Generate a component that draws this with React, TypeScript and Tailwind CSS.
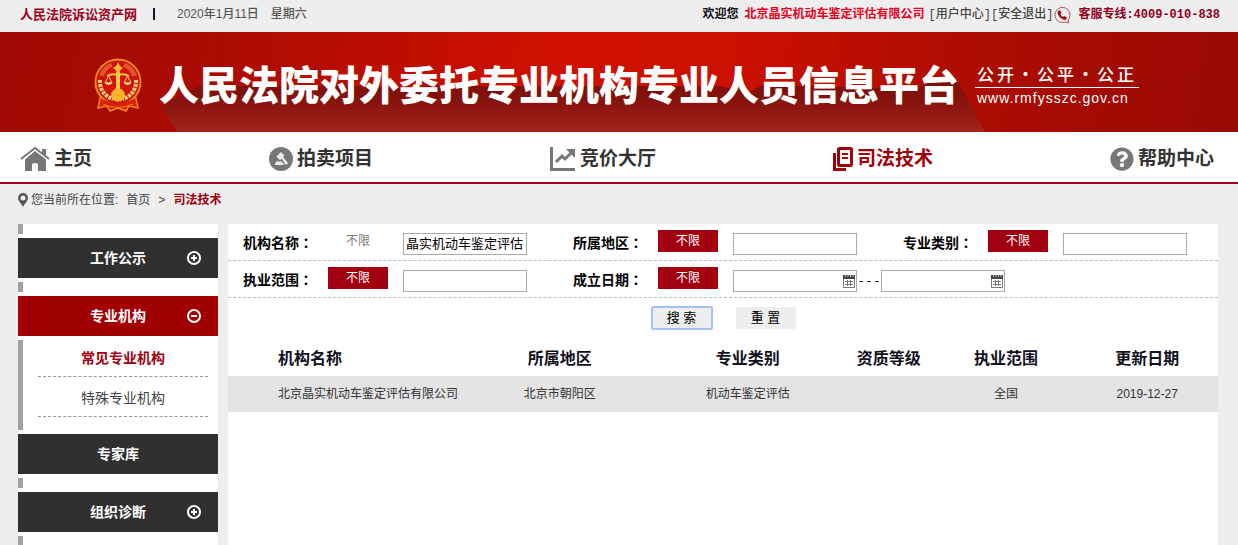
import { useState } from 'react'
import type { ReactNode } from 'react'
import { FaQuestionCircle } from 'react-icons/fa'

interface NavItem {
  label: string
  icon: ReactNode
  active?: boolean
}

interface SideItem {
  label: string
  toggle?: 'plus' | 'minus'
  children?: string[]
}

function Emblem() {
  return (
    <svg width="48" height="54" viewBox="0 0 48 54" className="shrink-0" aria-hidden="true">
      <path d="M7 36 L4 50 L13 48 L16 53 L24 50 L32 53 L35 48 L44 50 L41 36Z" fill="#d8200c" stroke="#f0861c" strokeWidth="1.5" />
      <circle cx="24" cy="24" r="22.5" fill="#c9150b" stroke="#f0861c" strokeWidth="2" />
      {/* flags above, wheat below */}
      <path d="M7.500 18 A18 18 0 0 1 18 7 M40.500 18 A18 18 0 0 0 30 7" fill="none" stroke="#e4532c" strokeWidth="5" />
      <path d="M6 22 A18 18 0 0 0 19 41 M42 22 A18 18 0 0 1 29 41" fill="none" stroke="#f7cf7a" strokeWidth="4" strokeDasharray="3 1" />
      <circle cx="24" cy="23" r="15" fill="#d3140b" />
      <path d="M24 4 L26 8 L29 10 L26.500 12 L25 15 H23 L21.500 12 L19 10 L22 8Z" fill="#fbb52d" />
      <path d="M13 18 Q18 15 24 17 Q30 15 35 18" fill="none" stroke="#fbc93f" strokeWidth="2" />
      <path d="M22 14h4v20h-4z" fill="#fbc93f" />
      <path d="M14.500 18 L11 25 H18Z M33.500 18 L30 25 H37Z" fill="none" stroke="#fbd980" />
      <path d="M10.500 24.500 h8 q-4 5 -8 0Z M29.500 24.500 h8 q-4 5 -8 0Z" fill="#fbd980" />
      <circle cx="24" cy="37" r="6.5" fill="#fbb52d" stroke="#f4c03c" strokeDasharray="2 1" />
      <path d="M8 43 Q24 51 40 43" fill="none" stroke="#d8200c" strokeWidth="4" />
      <path d="M9 46 Q24 53 39 46" fill="none" stroke="#f0861c" />
    </svg>
  )
}

function HomeIcon() {
  return (
    <svg width="30" height="26" viewBox="0 0 30 26" aria-hidden="true">
      <path d="M1 13 L15 2 L29 13" fill="none" stroke="currentColor" strokeWidth="2" />
      <path d="M22 3h4v7l-4-3z" fill="currentColor" />
      <path d="M15 5 L26 13.500 V25 H18 V19 Q18 17 15 17 Q12 17 12 19 V25 H5 V13.500Z" fill="currentColor" />
    </svg>
  )
}

function GavelIcon() {
  return (
    <svg width="24" height="24" viewBox="0 0 24 24" aria-hidden="true">
      <circle cx="12" cy="12" r="12" fill="currentColor" />
      <path d="M12 5 L15.500 8.500 L11 13 L7.500 9.500Z M12.500 11.500 L14 10 L19 16 L17 18Z M7 14.500h6v1.500h1.500V18H6v-2h1z" fill="#eee" />
    </svg>
  )
}

function ChartIcon() {
  return (
    <svg width="26" height="24" viewBox="0 0 26 24" aria-hidden="true">
      <path d="M1.500 0 V22.500 H25" fill="none" stroke="currentColor" strokeWidth="3" />
      <path d="M6 15 L12 9 L15 12 L22 5" fill="none" stroke="currentColor" strokeWidth="3" />
      <path d="M16 2h9v9z" fill="currentColor" />
    </svg>
  )
}

function DocsIcon() {
  return (
    <svg width="20" height="24" viewBox="0 0 20 24" fill="none" stroke="currentColor" aria-hidden="true">
      <rect x="5.500" y="1.500" width="13" height="17" rx="1" strokeWidth="3" />
      <path d="M1.500 6 V22.500 H13" strokeWidth="3" />
      <path d="M9 7h6M9 11h6" strokeWidth="2" />
    </svg>
  )
}

function PhoneIcon() {
  return (
    <svg width="18" height="18" viewBox="0 0 18 18" aria-hidden="true">
      <path d="M15 14 A7.500 7.500 0 1 0 12 16 L16 17Z" fill="none" stroke="#b4555a" />
      <path d="M5 5 L7 4 L8.500 7 L7.500 8 Q8 10 10 11 L11 10 L14 11.500 L13 13.500 Q11 15 7 11.500 Q3.500 7.500 5 5Z" fill="#a0101c" />
    </svg>
  )
}

function PinIcon() {
  return (
    <svg width="10" height="14" viewBox="0 0 10 14" aria-hidden="true">
      <path fillRule="evenodd" d="M5 0 A5 5 0 0 1 10 5 C10 8 7 10 5 14 C3 10 0 8 0 5 A5 5 0 0 1 5 0Z M5 2.500 A2.500 2.500 0 1 0 5 7.500 A2.500 2.500 0 1 0 5 2.500Z" fill="#555" />
    </svg>
  )
}

function ToggleIcon({ type }: { type: 'plus' | 'minus' }) {
  return (
    <svg width="14" height="14" viewBox="0 0 14 14" fill="none" stroke="#fff" strokeWidth="2" aria-hidden="true">
      <circle cx="7" cy="7" r="6" />
      <path d={type === 'plus' ? 'M4 7h6M7 4v6' : 'M4 7h6'} />
    </svg>
  )
}

function CalendarIcon() {
  return (
    <svg width="12" height="14" viewBox="0 0 12 14" fill="none" aria-hidden="true">
      <path d="M0.500 3.500h11v10h-11z" fill="#fff" stroke="#777" />
      <path d="M0 1h12v4H0z" fill="#444" />
      <path d="M2.500 1v2M5 1v2M7.500 1v2M10 1v2" stroke="#bbb" />
      <path d="M2 7.500h8M2 10.500h8M4.500 6v6M7.500 6v6" stroke="#777" />
    </svg>
  )
}

const navItems: NavItem[] = [
  { label: '主页', icon: <HomeIcon /> },
  { label: '拍卖项目', icon: <GavelIcon /> },
  { label: '竞价大厅', icon: <ChartIcon /> },
  { label: '司法技术', icon: <DocsIcon />, active: true },
  { label: '帮助中心', icon: <FaQuestionCircle size={24} /> },
]

const sideItems: SideItem[] = [
  { label: '工作公示', toggle: 'plus' },
  { label: '专业机构', toggle: 'minus', children: ['常见专业机构', '特殊专业机构'] },
  { label: '专家库' },
  { label: '组织诊断', toggle: 'plus' },
]

const rows = [
  {
    name: '北京晶实机动车鉴定评估有限公司',
    area: '北京市朝阳区',
    category: '机动车鉴定评估',
    level: '',
    scope: '全国',
    date: '2019-12-27',
  },
]

function Sidebar() {
  return (
    <aside className="flex w-[200px] shrink-0 flex-col bg-white">
      {sideItems.map((item, i) => (
        <div key={item.label}>
          {!sideItems[i - 1]?.children && <div className="h-[10px] w-[5px] bg-[#a0a0a0]" />}
          <button
            className={`my-1 grid h-10 w-full grid-cols-[1fr_auto_1fr] items-center text-sm font-bold text-white ${
              item.children ? 'bg-[#a00000]' : 'bg-[#303030]'
            }`}
          >
            <span />
            <span>{item.label}</span>
            <span className="flex justify-end pr-[17px]">{item.toggle && <ToggleIcon type={item.toggle} />}</span>
          </button>
          {item.children && (
            <ul className="h-[90px] border-l-[5px] border-[#a0a0a0] pr-[10px] pl-[15px] text-center text-sm">
              {item.children.map((child, n) => (
                <li key={child} className={`border-b border-dashed border-[#999] pb-2 ${n === 0 ? 'pt-2' : 'pt-[11px]'}`}>
                  <a href="#" className={`block leading-5 ${n === 0 ? 'font-bold text-[#a00010]' : 'text-[#444]'}`}>
                    {child}
                  </a>
                </li>
              ))}
            </ul>
          )}
        </div>
      ))}
      <div className="w-[5px] grow bg-[#a0a0a0]" />
    </aside>
  )
}

interface FieldProps {
  id: string
  label: string
  limited?: boolean
  children: ReactNode
}

function Field({ id, label, limited, children }: FieldProps) {
  return (
    <div className="flex h-9 items-start pl-[15px]">
      <label htmlFor={id} className="w-[85px] pt-2 text-sm leading-5 font-bold text-black">
        {label}
        <span className="font-['Noto_Sans_CJK_TC',sans-serif]" lang="zh-TW">：</span>
      </label>
      <button
        type="button"
        className={`mt-[6px] mr-[15px] h-[22px] w-[60px] text-xs ${limited ? 'text-[#777]' : 'bg-[#a0000f] text-white'}`}
      >
        不限
      </button>
      <div className="flex items-center pt-[9px]">{children}</div>
    </div>
  )
}

const inputClass = 'h-[22px] w-[124px] border border-[#aaa] bg-white px-[2px] pb-[3px] text-[13px] text-black outline-none'

function DateInput({ id, label }: { id: string; label: string }) {
  return (
    <span className="relative flex items-center">
      <input id={id} aria-label={label} className={inputClass} />
      <span className="absolute right-[2px]">
        <CalendarIcon />
      </span>
    </span>
  )
}

export default function App() {
  const [name, setName] = useState('晶实机动车鉴定评估')

  return (
    <div className="flex min-h-screen flex-col bg-[#eee] font-['Liberation_Sans','Noto_Sans_CJK_SC',sans-serif] text-xs text-[#444]">
      {/* Top bar */}
      <div className="flex h-8 items-center justify-between pr-[18px] pb-[3px] pl-5 font-bold">
        <div className="flex items-center">
          <a href="#" className="text-[13px] text-[#a00020]">人民法院诉讼资产网</a>
          <span className="mx-4 h-3 w-[2px] bg-[#201030]" />
          <span className="ml-[6px] font-medium text-[#555]">2020年1月11日</span>
          <span className="ml-3 font-medium text-[#555]">星期六</span>
        </div>
        <div className="flex items-center font-['Liberation_Mono','Noto_Sans_CJK_SC',monospace]">
          <span className="text-[#101020]">欢迎您</span>
          <span className="mr-1 ml-[6px] text-[#e6001e]">北京晶实机动车鉴定评估有限公司</span>
          <a href="#" className="font-medium">[用户中心]</a>
          <a href="#" className="font-medium">[安全退出]</a>
          <PhoneIcon />
          <span className="ml-[7px] text-[#900020]">客服专线:4009-010-838</span>
        </div>
      </div>

      {/* Banner */}
      <header className="flex h-[100px] bg-[linear-gradient(100deg,#a00a04_0%,#ab0c02_18%,#d01000_45%,#cc1000_58%,#ad0c02_78%,#980a04_100%)] pl-[94px]">
        <div className="flex items-center pt-[5px]">
          <Emblem />
        </div>
        <div className="relative ml-[17px] flex items-center pt-2">
          <svg className="absolute bottom-0 left-0 h-[60px] w-[830px]" viewBox="0 0 830 60" preserveAspectRatio="none" aria-hidden="true">
            <defs>
              <linearGradient id="fade" x1="0" y1="0" x2="0" y2="1">
                <stop offset="0" stopColor="#7c0d08" />
                <stop offset="0.4" stopColor="#86140d" />
                <stop offset="1" stopColor="#a3231b" />
              </linearGradient>
            </defs>
            <path d="M2 34 L18 60 H826 L798 8 H770 L760 16 H725 L640 14 L610 10 L590 20 L560 14 H270 L230 16 L200 14 H40Z" fill="url(#fade)" />
          </svg>
          <h1 className="relative text-[40px] leading-none font-black whitespace-nowrap text-white">
            人民法院对外委托专业机构专业人员信息平台
          </h1>
        </div>
        <div className="mt-8 ml-4 text-white">
          <p className="border-b border-white px-[2px] pb-[3px] font-['Noto_Sans_CJK_SC',sans-serif] text-[17px] leading-5 font-medium tracking-[3px] whitespace-nowrap">
            公开·公平·公正
          </p>
          <p className="px-[2px] text-sm leading-5 tracking-[1px]">www.rmfysszc.gov.cn</p>
        </div>
      </header>

      {/* Navigation */}
      <nav className="flex h-[52px] items-center justify-between border-b-2 border-[#a00020] bg-white pr-6 pl-5 text-[#777]">
        {navItems.map((item) => (
          <a key={item.label} href="#" className={`flex items-center gap-1 pt-1 ${item.active ? 'text-[#a00008]' : ''}`}>
            {item.icon}
            <span className={`text-[19px] leading-7 font-bold ${item.active ? '' : 'text-[#333]'}`}>{item.label}</span>
          </a>
        ))}
      </nav>

      {/* Breadcrumb */}
      <div className="flex h-10 items-center pb-2 pl-[18px]">
        <PinIcon />
        <span className="ml-[3px]">您当前所在位置:</span>
        <a href="#" className="ml-2">首页</a>
        <span className="mx-2">&gt;</span>
        <a href="#" className="font-bold text-[#a00010]">司法技术</a>
      </div>

      <div className="flex grow gap-[10px] pr-5 pl-[18px]">
        <Sidebar />

        <main className="min-w-0 grow bg-white">
          <form onSubmit={(e) => e.preventDefault()}>
            <div className="grid grid-cols-3 border-b border-dashed border-[#bbb]">
              <Field id="name" label="机构名称" limited>
                <input id="name" value={name} onChange={(e) => setName(e.target.value)} className={inputClass} />
              </Field>
              <Field id="area" label="所属地区">
                <input id="area" className={inputClass} />
              </Field>
              <Field id="category" label="专业类别">
                <input id="category" className={inputClass} />
              </Field>
            </div>
            <div className="grid grid-cols-3 border-b border-dashed border-[#bbb]">
              <Field id="scope" label="执业范围">
                <input id="scope" className={inputClass} />
              </Field>
              <div className="col-span-2">
                <Field id="from" label="成立日期">
                  <DateInput id="from" label="成立日期起" />
                  <span className="w-6 text-center font-['DejaVu_Sans_Mono',monospace] text-[13px] leading-4 text-black">---</span>
                  <DateInput id="to" label="成立日期止" />
                </Field>
              </div>
            </div>
            <div className="flex h-10 items-center justify-center gap-[23px] text-black">
              <button type="submit" className="h-6 w-[62px] rounded-xs border-2 border-[#a4c0f4] bg-[#eee] text-[13px]">
                搜 索
              </button>
              <button type="reset" className="h-[22px] w-[60px] bg-[#eee] text-[13px]">
                重 置
              </button>
            </div>
          </form>

          {/* Results */}
          <table className="mt-[2px] w-full table-fixed text-center">
            <thead>
              <tr className="h-9 text-base text-[#101020]">
                <th className="w-[24%] pt-[2px] pl-[50px] text-left">机构名称</th>
                <th className="w-[19%] pt-[2px]">所属地区</th>
                <th className="w-[19%] pt-[2px]">专业类别</th>
                <th className="w-[9.5%] pt-[2px]">资质等级</th>
                <th className="w-[14.2%] pt-[2px]">执业范围</th>
                <th className="pt-[2px]">更新日期</th>
              </tr>
            </thead>
            <tbody>
              {rows.map((row) => (
                <tr key={row.name} className="h-9 bg-[#e4e4e4] text-[#333]">
                  <td className="pl-[50px] text-left">{row.name}</td>
                  <td>{row.area}</td>
                  <td>{row.category}</td>
                  <td>{row.level}</td>
                  <td>{row.scope}</td>
                  <td>{row.date}</td>
                </tr>
              ))}
            </tbody>
          </table>
        </main>
      </div>
    </div>
  )
}
